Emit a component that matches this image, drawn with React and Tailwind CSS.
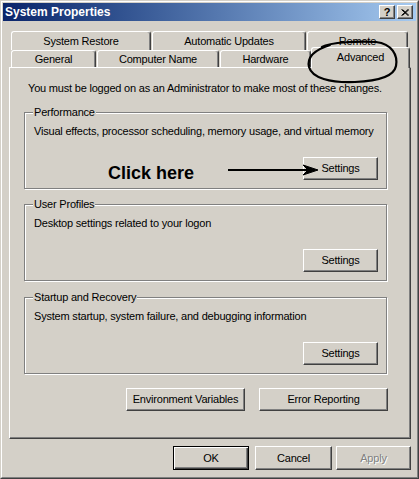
import React from 'react';

const raised =
  'border border-t-white border-l-white border-r-[#404040] border-b-[#404040] shadow-[inset_-1px_-1px_0_#808080]';

const WinButton = ({ children, className = '', disabled = false }) => (
  <div className={`flex h-[23px] items-center justify-center bg-[#d4d0c8] ${raised} ${className}`}>
    <span className={disabled ? 'text-[#808080] [text-shadow:1px_1px_0_#fff]' : ''}>{children}</span>
  </div>
);

const Tab = ({ children, className = '' }) => (
  <div
    className={`flex items-center justify-center rounded-t-[3px] border-t border-l border-r border-t-white border-l-white border-r-[#404040] shadow-[inset_-1px_0_0_#808080] bg-[#d4d0c8] ${className}`}
  >
    {children}
  </div>
);

const Group = ({ label, text, className = '', children }) => (
  <div
    className={`relative flex h-[77px] w-[363px] flex-col border border-[#808080] pl-[9px] pt-[12px] shadow-[1px_1px_0_#fff,inset_1px_1px_0_#fff] ${className}`}
  >
    <span className="absolute -top-[7px] left-[8px] bg-[#d4d0c8] px-[1px] leading-[13px]">{label}</span>
    <p className="whitespace-nowrap leading-[13px]">{text}</p>
    {children}
  </div>
);

export default function App() {
  return (
    <div className="relative h-[479px] w-[419px] border border-t-[#d4d0c8] border-l-[#d4d0c8] border-r-[#404040] border-b-[#404040] bg-[#d4d0c8] font-['Liberation_Sans',Arial,sans-serif] text-[11px] tracking-[-0.2px] text-black">
      <div className="flex h-full flex-col border border-t-white border-l-white border-r-[#808080] border-b-[#808080] p-[1px]">
        {/* title bar */}
        <div className="flex h-[18px] items-center bg-linear-to-r from-[#0a246a] to-[#a6caf0] pl-[2px] pr-[3px]">
          <span className="text-[12px] font-bold leading-none tracking-normal text-white">System Properties</span>
          <div className={`ml-auto flex h-[14px] w-[16px] items-center justify-center bg-[#d4d0c8] ${raised}`}>
            <span className="text-[11px] font-bold leading-none">?</span>
          </div>
          <div className={`ml-[2px] flex h-[14px] w-[16px] items-center justify-center bg-[#d4d0c8] ${raised}`}>
            <svg width="8" height="7" viewBox="0 0 8 7">
              <path d="M0.5 0.5 L7 6.5 M1.5 0.5 L8 6.5 M7 0.5 L0.5 6.5 M8 0.5 L1.5 6.5" stroke="#000" strokeWidth="1" />
            </svg>
          </div>
        </div>

        {/* tabs */}
        <div className="ml-[8px] mt-[10px] flex h-[19px] gap-[1px]">
          <Tab className="w-[140px]">System Restore</Tab>
          <Tab className="w-[154px]">Automatic Updates</Tab>
          <Tab className="w-[101px]">Remote</Tab>
        </div>
        <div className="relative z-10 ml-[8px] -mt-[3px] flex items-end">
          <Tab className="h-[17px] w-[85px]">General</Tab>
          <Tab className="ml-[1px] h-[17px] w-[122px]">Computer Name</Tab>
          <Tab className="ml-[1px] h-[17px] w-[91px]">Hardware</Tab>
          <Tab className="-mb-[1px] h-[21px] w-[99px] pb-[1px]">Advanced</Tab>
        </div>

        {/* tab page */}
        <div className={`ml-[6px] flex h-[372px] w-[402px] flex-col pl-[14px] ${raised}`}>
          <p className="mt-[14px] whitespace-nowrap pl-[4px] leading-[13px]">
            You must be logged on as an Administrator to make most of these changes.
          </p>

          <Group
            className="mt-[17px]"
            label="Performance"
            text="Visual effects, processor scheduling, memory usage, and virtual memory"
          >
            <div className="mt-[19px] flex items-start">
              <span className="ml-[74px] mt-[6px] text-[18px] font-bold leading-[20px] tracking-normal">Click here</span>
              <WinButton className="ml-auto mr-[8px] w-[75px]">Settings</WinButton>
            </div>
            <svg className="absolute left-0 top-0 z-10" width="300" height="70" viewBox="0 0 300 70">
              <path d="M203 57 H286" stroke="#000" strokeWidth="2" />
              <path d="M293 57 L278 52 L283 57 L278 62 Z" fill="#000" stroke="#000" strokeWidth="1" />
            </svg>
          </Group>

          <Group className="mt-[15px]" label="User Profiles" text="Desktop settings related to your logon">
            <WinButton className="mr-[8px] mt-[19px] w-[75px] self-end">Settings</WinButton>
          </Group>

          <Group
            className="mt-[16px]"
            label="Startup and Recovery"
            text="System startup, system failure, and debugging information"
          >
            <WinButton className="mr-[8px] mt-[19px] w-[75px] self-end">Settings</WinButton>
          </Group>

          <div className="ml-[102px] mt-[14px] flex gap-[14px]">
            <WinButton className="w-[119px]">Environment Variables</WinButton>
            <WinButton className="w-[129px]">Error Reporting</WinButton>
          </div>
        </div>

        {/* dialog buttons */}
        <div className="mr-[5px] mt-[7px] flex justify-end">
          <div className="flex h-[24px] w-[76px] items-center justify-center border border-black shadow-[inset_1px_1px_0_#fff,inset_-1px_-1px_0_#404040,inset_-2px_-2px_0_#808080]">
            OK
          </div>
          <WinButton className="ml-[6px] h-[24px] w-[77px]">Cancel</WinButton>
          <WinButton className="ml-[4px] h-[24px] w-[75px]" disabled>
            Apply
          </WinButton>
        </div>
      </div>

      {/* hand-drawn circle around the Advanced tab */}
      <svg className="pointer-events-none absolute -left-px -top-px z-20" width="419" height="100" viewBox="0 0 419 100">
        <path
          d="M322 47 C330 42 360 41 376 42 C392 44 398 55 396 66 C394 76 380 81 355 82 C330 83 312 78 309 67 C307 58 314 50 330 45"
          fill="none"
          stroke="#000"
          strokeWidth="2.2"
          strokeLinecap="round"
        />
      </svg>
    </div>
  );
}
